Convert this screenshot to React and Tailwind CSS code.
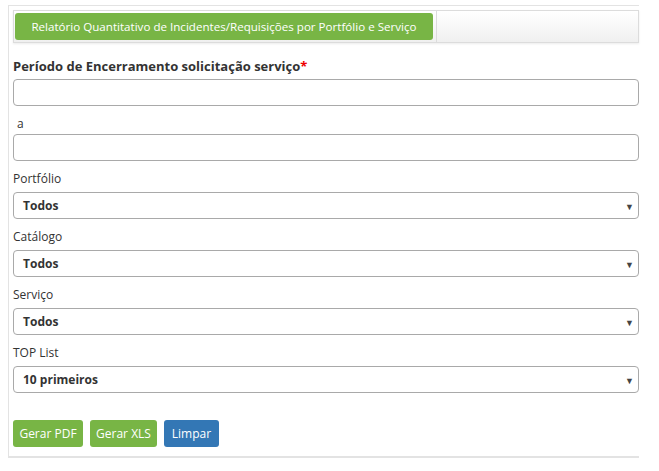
import React from "react";

const Caret = () => (
  <span className="absolute right-[4px] top-1/2 -translate-y-1/2 text-[9px] leading-none text-[#444]">▼</span>
);

const SelectField = ({ label, value }) => (
  <div className="mt-[6px]">
    <div className="h-[21px] pt-[3px] text-[12px] leading-[18px] text-[#333]">{label}</div>
    <div className="relative mt-[4px] flex h-[27px] items-center rounded-[4px] border border-[#a9a9a9] bg-white pl-[9px] text-[12px] font-bold text-[#333]">
      {value}
      <Caret />
    </div>
  </div>
);

export default function App() {
  return (
    <div className="h-[471px] w-[659px] bg-white font-['Open_Sans',sans-serif]">
      <div className="ml-[8px] mt-[5px] h-[453px] w-[631px] border-b-2 border-l border-t border-[#e3e3e3] pl-[4px] pt-[4px]">
        {/* tab bar */}
        <div className="flex h-[33px] w-[626px] items-center border border-[#dcdcdc] bg-gradient-to-b from-[#ffffff] to-[#f0f0f0] pl-[1px] shadow-[0_1px_2px_rgba(0,0,0,0.08)]">
          <div className="flex h-[27px] w-[418px] items-center justify-center rounded-[3px] bg-[#78b545] text-[11.6px] text-white">
            Relatório Quantitativo de Incidentes/Requisições por Portfólio e Serviço
          </div>
          <div className="ml-[3px] h-[31px] w-px bg-[#dcdcdc]" />
        </div>

        <div className="w-[626px]">
          <div className="mt-[14px] h-[22px] text-[13px] font-bold leading-[18px] text-[#333]">
            Período de Encerramento solicitação serviço<span className="text-[#e00]">*</span>
          </div>
          <div className="h-[27px] rounded-[4px] border border-[#a9a9a9] bg-white" />

          <div className="mt-[5px] h-[22px] pl-[4px] pt-[5px] text-[12px] leading-[16px] text-[#333]">a</div>
          <div className="mt-[1px] h-[27px] rounded-[4px] border border-[#a9a9a9] bg-white" />

          <SelectField label="Portfólio" value="Todos" />
          <SelectField label="Catálogo" value="Todos" />
          <SelectField label="Serviço" value="Todos" />
          <SelectField label="TOP List" value="10 primeiros" />

          <div className="mt-[27px] flex gap-[7px]">
            <button className="h-[27px] w-[70px] rounded-[3px] bg-[#78b545] text-[12px] text-white">Gerar PDF</button>
            <button className="h-[27px] w-[67px] rounded-[3px] bg-[#78b545] text-[12px] text-white">Gerar XLS</button>
            <button className="h-[27px] w-[55px] rounded-[3px] bg-[#3377b5] text-[12px] text-white">Limpar</button>
          </div>
        </div>
      </div>
    </div>
  );
}
